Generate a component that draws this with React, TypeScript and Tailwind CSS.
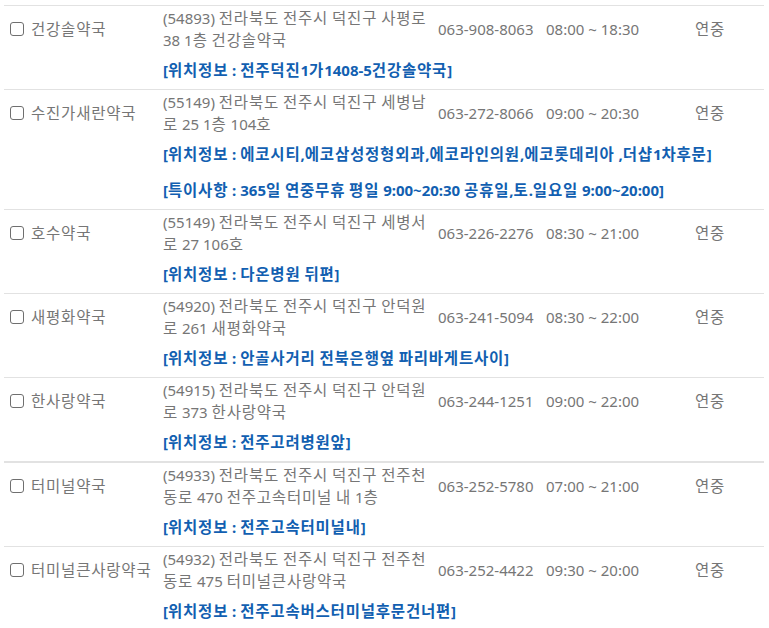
import React from 'react';

type Pharmacy = {
  name: string;
  addr: [string, string];
  phone: string;
  hours: string;
  notes: string[];
  thick?: boolean;
};

const pharmacies: Pharmacy[] = [
  {
    name: '건강솔약국',
    addr: ['(54893) 전라북도 전주시 덕진구 사평로', '38 1층 건강솔약국'],
    phone: '063-908-8063',
    hours: '08:00 ~ 18:30',
    notes: ['[위치정보 : 전주덕진1가1408-5건강솔약국]'],
  },
  {
    name: '수진가새란약국',
    addr: ['(55149) 전라북도 전주시 덕진구 세병남', '로 25 1층 104호'],
    phone: '063-272-8066',
    hours: '09:00 ~ 20:30',
    notes: [
      '[위치정보 : 에코시티,에코삼성정형외과,에코라인의원,에코롯데리아 ,더샵1차후문]',
      '[특이사항 : 365일 연중무휴 평일 9:00~20:30 공휴일,토.일요일 9:00~20:00]',
    ],
  },
  {
    name: '호수약국',
    addr: ['(55149) 전라북도 전주시 덕진구 세병서', '로 27 106호'],
    phone: '063-226-2276',
    hours: '08:30 ~ 21:00',
    notes: ['[위치정보 : 다온병원 뒤편]'],
  },
  {
    name: '새평화약국',
    addr: ['(54920) 전라북도 전주시 덕진구 안덕원', '로 261 새평화약국'],
    phone: '063-241-5094',
    hours: '08:30 ~ 22:00',
    notes: ['[위치정보 : 안골사거리 전북은행옆 파리바게트사이]'],
  },
  {
    name: '한사랑약국',
    addr: ['(54915) 전라북도 전주시 덕진구 안덕원', '로 373 한사랑약국'],
    phone: '063-244-1251',
    hours: '09:00 ~ 22:00',
    notes: ['[위치정보 : 전주고려병원앞]'],
  },
  {
    name: '터미널약국',
    addr: ['(54933) 전라북도 전주시 덕진구 전주천', '동로 470 전주고속터미널 내 1층'],
    phone: '063-252-5780',
    hours: '07:00 ~ 21:00',
    notes: ['[위치정보 : 전주고속터미널내]'],
    thick: true,
  },
  {
    name: '터미널큰사랑약국',
    addr: ['(54932) 전라북도 전주시 덕진구 전주천', '동로 475 터미널큰사랑약국'],
    phone: '063-252-4422',
    hours: '09:30 ~ 20:00',
    notes: ['[위치정보 : 전주고속버스터미널후문건너편]'],
  },
];

// hangul runs get a little tracking so they take the width of the original font
const K = (s: string) =>
  s.split(/([\uAC00-\uD7A3]+)/).map((part, i) =>
    /[\uAC00-\uD7A3]/.test(part) ? (
      <span key={i} className="text-[15.5px] tracking-[0.8px]">
        {part}
      </span>
    ) : (
      part
    )
  );

const Row = ({ p }: { p: Pharmacy }) => {
  return (
    <div
      className={
        p.thick
          ? 'border-t-2 border-[#e2e2e2] pt-[1px] pb-[8px]'
          : 'border-t border-[#e2e2e2] pt-[1px] pb-[8px]'
      }
    >
      <div className="flex items-center">
        <div className="w-[159px] flex items-center pl-[6px] leading-[22px]">
          <span className="w-[14px] h-[14px] border border-[#6f6f6f] rounded-[3px] mr-[7px] shrink-0" />
          <span className="whitespace-nowrap">{K(p.name)}</span>
        </div>
        <div className="w-[275px] leading-[22px] whitespace-nowrap">
          <div>{K(p.addr[0])}</div>
          <div>{K(p.addr[1])}</div>
        </div>
        <div className="w-[108px] whitespace-nowrap">{p.phone}</div>
        <div className="w-[149px] whitespace-nowrap">{p.hours}</div>
        <div className="whitespace-nowrap leading-[22px]">{K('연중')}</div>
      </div>
      {p.notes.map((n, i) => (
        <p
          key={i}
          className={
            i === 0
              ? 'mt-[8px] pl-[159px] leading-[22px] font-bold text-[#125fb1] whitespace-nowrap'
              : 'mt-[14px] pl-[159px] leading-[22px] font-bold text-[#125fb1] whitespace-nowrap'
          }
        >
          {K(n)}
        </p>
      ))}
    </div>
  );
};

const App = () => {
  return (
    <div className="w-[769px] h-[628px] overflow-hidden bg-white pt-[5px]">
      <div
        className="ml-[4px] w-[760px] text-[15px] text-[#767676]"
        style={{ fontFamily: '"Noto Sans", "Noto Sans CJK KR", sans-serif' }}
      >
        {pharmacies.map((p) => (
          <Row key={p.name} p={p} />
        ))}
        <div className="border-t border-[#e2e2e2]" />
      </div>
    </div>
  );
};

export default App;
